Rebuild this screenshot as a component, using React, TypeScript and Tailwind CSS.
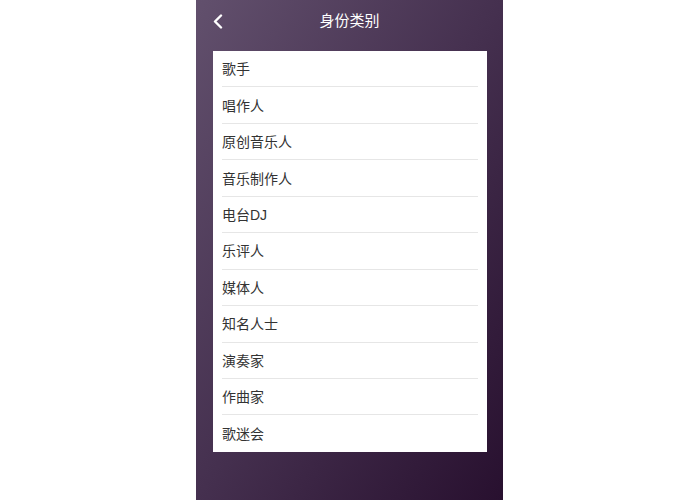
import React from "react";

const items = [
  "歌手",
  "唱作人",
  "原创音乐人",
  "音乐制作人",
  "电台DJ",
  "乐评人",
  "媒体人",
  "知名人士",
  "演奏家",
  "作曲家",
  "歌迷会",
];

export default function App() {
  return (
    <div
      className="w-[700px] h-[500px] bg-white flex pl-[196px]"
      style={{ fontFamily: '"Liberation Sans", "Noto Sans CJK SC", sans-serif' }}
    >
      <div className="w-[307px] h-full bg-gradient-to-br from-[#62506d] via-[#45304f] to-[#28102f] flex flex-col">
        <div className="relative h-[42px] flex items-center justify-center">
          <svg
            className="absolute left-[16px] top-[14px]"
            width="12"
            height="15"
            viewBox="0 0 12 15"
            fill="none"
          >
            <path d="M9 1.5 L3 7.5 L9 13.5" stroke="white" strokeWidth="2.4" strokeLinecap="round" strokeLinejoin="round" />
          </svg>
          <span className="text-white text-[15px]">身份类别</span>
        </div>
        <div className="mt-[9px] ml-[17px] w-[274px] bg-white">
          {items.map((item, idx) => (
            <div key={idx} className="px-[9px]">
              <div
                className={
                  "h-[36.45px] pt-[2px] flex items-center text-[14px] text-[#333333] " +
                  (idx < items.length - 1 ? "border-b border-[#e6e6e6]" : "")
                }
              >
                {item}
              </div>
            </div>
          ))}
        </div>
      </div>
    </div>
  );
}
